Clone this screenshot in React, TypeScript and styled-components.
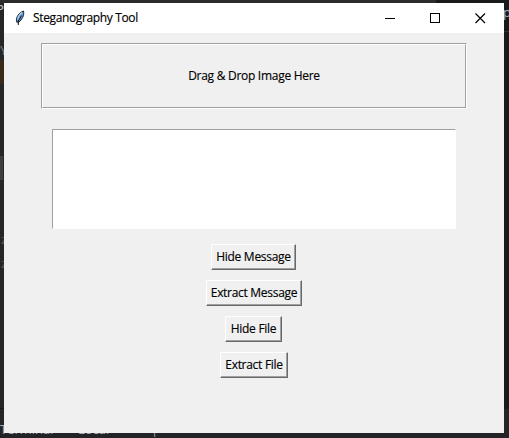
import React from 'react';
import styled, { createGlobalStyle } from 'styled-components';

const GlobalStyle = createGlobalStyle`
  * { box-sizing: border-box; }
  html, body { margin: 0; overflow: hidden; }
`;

/* The dark editor that lies behind the dialog and shows only at its edges. */
const Desktop = styled.div`
  position: relative;
  width: 509px;
  height: 438px;
  padding: 3px 5px 5px 4px;
  overflow: hidden;
  background:
    linear-gradient(#242527, #242527) 504px 409px / 5px 29px no-repeat,
    linear-gradient(#222327, #222327) 0 433px / 509px 5px no-repeat,
    linear-gradient(#2b2b2e, #2b2b2e) 0 0 / 436px 3px no-repeat,
    linear-gradient(#303134, #303134) 504px 31px / 5px 1px no-repeat,
    linear-gradient(#38291a, #38291a) 0 60px / 4px 24px no-repeat,
    linear-gradient(#3e3e40, #3e3e40) 0 156px / 3px 24px no-repeat,
    linear-gradient(#18191a, #18191a) 0 408px / 4px 1px no-repeat,
    linear-gradient(90deg, #262626 50%, #18191a 50%);
  font-family: 'Open Sans', 'Noto Sans', sans-serif;
  font-size: 12px;
  color: #000;
`;

const BackText = styled.span<{ $x: number; $y: number; $c: string }>`
  position: absolute;
  left: ${p => p.$x}px;
  top: ${p => p.$y}px;
  color: ${p => p.$c};
  font-size: 13px;
  line-height: 16px;
  white-space: pre;
`;

const Window = styled.main`
  position: relative;
  display: flex;
  flex-direction: column;
  width: 500px;
  height: 430px;
  background: #f0f0f0;
`;

const TitleBar = styled.header`
  display: flex;
  align-items: center;
  height: 30px;
  flex: none;
  padding: 0 1px 0 8px;
  background: #fff;
`;

const Title = styled.span`
  flex: 1;
  margin-left: 5px;
  line-height: 16px;
  letter-spacing: -0.36px;
  white-space: nowrap;
  -webkit-text-stroke: 0.15px #000;
`;

const Control = styled.button`
  display: flex;
  align-items: center;
  justify-content: center;
  width: 45px;
  height: 30px;
  padding: 0;
  border: 0;
  background: none;
`;

const Body = styled.section`
  display: flex;
  flex-direction: column;
  align-items: center;
  padding-top: 10px;
`;

const DropZone = styled.div`
  width: 426px;
  height: 66px;
  border: 1px solid;
  border-color: #a0a0a0 #fff #fff #a0a0a0;
`;

const DropLabel = styled.div`
  display: flex;
  align-items: center;
  justify-content: center;
  height: 100%;
  padding-bottom: 1px;
  border: 1px solid;
  border-color: #fff #a0a0a0 #a0a0a0 #fff;
  line-height: 16px;
  letter-spacing: -0.28px;
  -webkit-text-stroke: 0.15px #000;
`;

const MessageBox = styled.textarea`
  display: block;
  width: 404px;
  height: 100px;
  margin: 20px 0 15px;
  padding: 2px;
  border: 1px solid;
  border-color: #a0a0a0 #fff #fff #a0a0a0;
  border-radius: 0;
  outline: 0;
  resize: none;
  background: #fff;
`;

const Actions = styled.div`
  display: flex;
  flex-direction: column;
  align-items: center;
  gap: 10px;
`;

const ActionButton = styled.button<{ $width: number }>`
  width: ${p => p.$width}px;
  height: 26px;
  margin: 0 ${p => p.$width % 2}px 0 0;
  padding: 0;
  border: 1px solid;
  border-color: #fff #696969 #696969 #fff;
  box-shadow: inset -1px -1px #a0a0a0;
  background: #f0f0f0;
  color: #000;
  font: inherit;
  line-height: 16px;
  letter-spacing: -0.29px;
  white-space: nowrap;
  -webkit-text-stroke: 0.15px #000;
`;

const Feather = () => (
  <svg width="16" height="16" viewBox="0 0 16 16">
    <path d="M11.5 1C8.2 2 5.2 5.2 4.4 9.2L4.8 12.2L7 12C10 9.6 12.5 5.5 11.5 1Z" fill="#5a9be0" stroke="#20242c" strokeWidth="1" />
    <path d="M10 2.5C7.8 4 6.3 6.5 5.6 9.5" fill="none" stroke="#b9cfe4" strokeWidth="1.2" />
    <path d="M9.6 5.5L6.3 11L6.3 15" fill="none" stroke="#111" strokeWidth="1" />
  </svg>
);

const actions = [
  { label: 'Hide Message', width: 85 },
  { label: 'Extract Message', width: 96 },
  { label: 'Hide File', width: 57 },
  { label: 'Extract File', width: 68 },
];

export default function App() {
  return (
    <>
      <GlobalStyle />
      <Desktop>
        <BackText $x={-4} $y={1} $c="#c5c7ce">P</BackText>
        <BackText $x={503} $y={4} $c="#a5b4c6">p</BackText>
        <BackText $x={0} $y={42} $c="#77797c">Y</BackText>
        <BackText $x={1} $y={231} $c="#55575a">z</BackText>
        <BackText $x={1} $y={255} $c="#55575a">z</BackText>
        <BackText $x={0} $y={421} $c="#a8aaaf">Terminal</BackText>
        <BackText $x={78} $y={421} $c="#a8aaaf">Local</BackText>
        <BackText $x={151} $y={421} $c="#a8aaaf">|</BackText>
        <Window>
          <TitleBar>
            <Feather />
            <Title>Steganography Tool</Title>
            <Control aria-label="Minimize">
              <svg width="11" height="11" shapeRendering="crispEdges"><path d="M0 5.5H10" stroke="#000" /></svg>
            </Control>
            <Control aria-label="Maximize">
              <svg width="11" height="11" shapeRendering="crispEdges"><path d="M.5 .5H9.5V9.5H.5Z" fill="none" stroke="#000" /></svg>
            </Control>
            <Control aria-label="Close">
              <svg width="11" height="11"><path d="M.5 .5L10 10M10 .5L.5 10" stroke="#000" strokeWidth="1.2" /></svg>
            </Control>
          </TitleBar>
          <Body>
            <DropZone><DropLabel>Drag &amp; Drop Image Here</DropLabel></DropZone>
            <MessageBox aria-label="Message" />
            <Actions>
              {actions.map(a => (
                <ActionButton key={a.label} $width={a.width}>{a.label}</ActionButton>
              ))}
            </Actions>
          </Body>
        </Window>
      </Desktop>
    </>
  );
}
